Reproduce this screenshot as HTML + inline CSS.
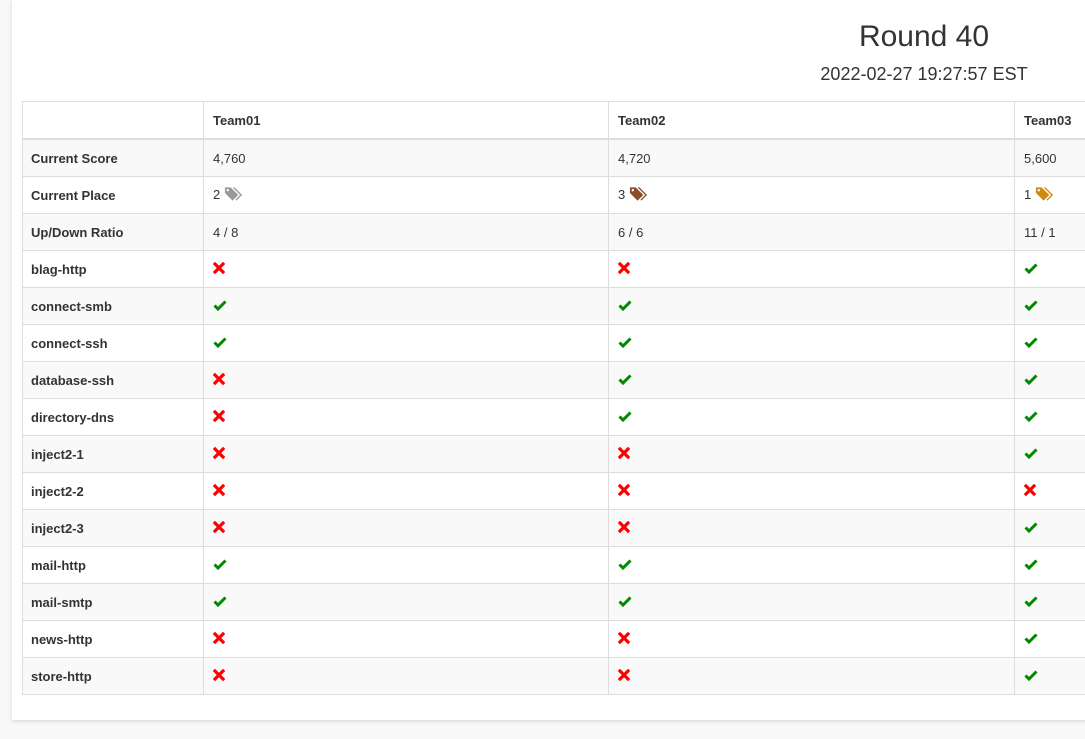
<!DOCTYPE html>
<html><head><style>
html,body{margin:0;padding:0;background:#f8f8f8;width:1085px;height:739px;overflow:hidden;font-family:"Liberation Sans",Arial,sans-serif;color:#333}
.panel{position:absolute;left:12px;top:0;width:1200px;height:720px;background:#fff;box-shadow:0 1px 4px rgba(0,0,0,.15)}
.t1{position:absolute;left:774px;width:300px;text-align:center;top:19px;font-size:30px;line-height:36px;color:#333}
.t2{position:absolute;left:774px;width:300px;text-align:center;top:63px;font-size:18px;line-height:22px}
table{position:absolute;left:22px;top:101px;border-collapse:collapse;table-layout:fixed;width:1400px;font-size:13px}
td,th{border:1px solid #ddd;padding:0 8px 0 9px;height:36px;text-align:left;vertical-align:middle}
td:first-child,th:first-child{padding-left:8px}
th{font-weight:bold;border-bottom:2px solid #ddd}
td:first-child{font-weight:bold}
tbody tr:nth-child(odd){background:#f9f9f9}
svg{vertical-align:middle;position:relative;top:-2px}
svg.tg{top:-1px}
</style></head><body>
<div class="panel"></div>
<div class="t1">Round 40</div>
<div class="t2">2022-02-27 19:27:57 EST</div>
<svg width="0" height="0" style="position:absolute"><defs>
<symbol id="x" viewBox="0 0 12 12"><path d="M2 2L10 10M10 2L2 10" stroke="#f00" stroke-width="3.2" stroke-linecap="square"/></symbol>
<symbol id="c" viewBox="0 0 14 12"><path d="M1.5 6.5L5 10L12.5 2.5" stroke="#080" stroke-width="3" fill="none"/></symbol>
<symbol id="tag" viewBox="0 0 20 16"><path d="M1 1h6l8 8-6 6-8-8z" fill="currentColor"/><circle cx="4" cy="4" r="1.3" fill="#fff"/><path d="M9 1h2l8 8-6 6-1-1 5-5z" fill="currentColor"/></symbol>
</defs></svg>
<table>
<colgroup><col style="width:181px"><col style="width:405px"><col style="width:406px"><col style="width:408px"></colgroup>
<thead><tr><th></th><th>Team01</th><th>Team02</th><th>Team03</th></tr></thead>
<tbody>
<tr><td>Current Score</td><td>4,760</td><td>4,720</td><td>5,600</td></tr>
<tr><td>Current Place</td><td>2 <svg class="tg" width="19" height="16" style="color:#999"><use href="#tag"/></svg></td><td>3 <svg class="tg" width="19" height="16" style="color:#8b4c2a"><use href="#tag"/></svg></td><td>1 <svg class="tg" width="19" height="16" style="color:#d08a10"><use href="#tag"/></svg></td></tr>
<tr><td>Up/Down Ratio</td><td>4 / 8</td><td>6 / 6</td><td>11 / 1</td></tr>
<tr><td>blag-http</td><td><svg width="12" height="12"><use href="#x"/></svg></td><td><svg width="12" height="12"><use href="#x"/></svg></td><td><svg width="14" height="12"><use href="#c"/></svg></td></tr>
<tr><td>connect-smb</td><td><svg width="14" height="12"><use href="#c"/></svg></td><td><svg width="14" height="12"><use href="#c"/></svg></td><td><svg width="14" height="12"><use href="#c"/></svg></td></tr>
<tr><td>connect-ssh</td><td><svg width="14" height="12"><use href="#c"/></svg></td><td><svg width="14" height="12"><use href="#c"/></svg></td><td><svg width="14" height="12"><use href="#c"/></svg></td></tr>
<tr><td>database-ssh</td><td><svg width="12" height="12"><use href="#x"/></svg></td><td><svg width="14" height="12"><use href="#c"/></svg></td><td><svg width="14" height="12"><use href="#c"/></svg></td></tr>
<tr><td>directory-dns</td><td><svg width="12" height="12"><use href="#x"/></svg></td><td><svg width="14" height="12"><use href="#c"/></svg></td><td><svg width="14" height="12"><use href="#c"/></svg></td></tr>
<tr><td>inject2-1</td><td><svg width="12" height="12"><use href="#x"/></svg></td><td><svg width="12" height="12"><use href="#x"/></svg></td><td><svg width="14" height="12"><use href="#c"/></svg></td></tr>
<tr><td>inject2-2</td><td><svg width="12" height="12"><use href="#x"/></svg></td><td><svg width="12" height="12"><use href="#x"/></svg></td><td><svg width="12" height="12"><use href="#x"/></svg></td></tr>
<tr><td>inject2-3</td><td><svg width="12" height="12"><use href="#x"/></svg></td><td><svg width="12" height="12"><use href="#x"/></svg></td><td><svg width="14" height="12"><use href="#c"/></svg></td></tr>
<tr><td>mail-http</td><td><svg width="14" height="12"><use href="#c"/></svg></td><td><svg width="14" height="12"><use href="#c"/></svg></td><td><svg width="14" height="12"><use href="#c"/></svg></td></tr>
<tr><td>mail-smtp</td><td><svg width="14" height="12"><use href="#c"/></svg></td><td><svg width="14" height="12"><use href="#c"/></svg></td><td><svg width="14" height="12"><use href="#c"/></svg></td></tr>
<tr><td>news-http</td><td><svg width="12" height="12"><use href="#x"/></svg></td><td><svg width="12" height="12"><use href="#x"/></svg></td><td><svg width="14" height="12"><use href="#c"/></svg></td></tr>
<tr><td>store-http</td><td><svg width="12" height="12"><use href="#x"/></svg></td><td><svg width="12" height="12"><use href="#x"/></svg></td><td><svg width="14" height="12"><use href="#c"/></svg></td></tr>
</tbody></table>
</body></html>
